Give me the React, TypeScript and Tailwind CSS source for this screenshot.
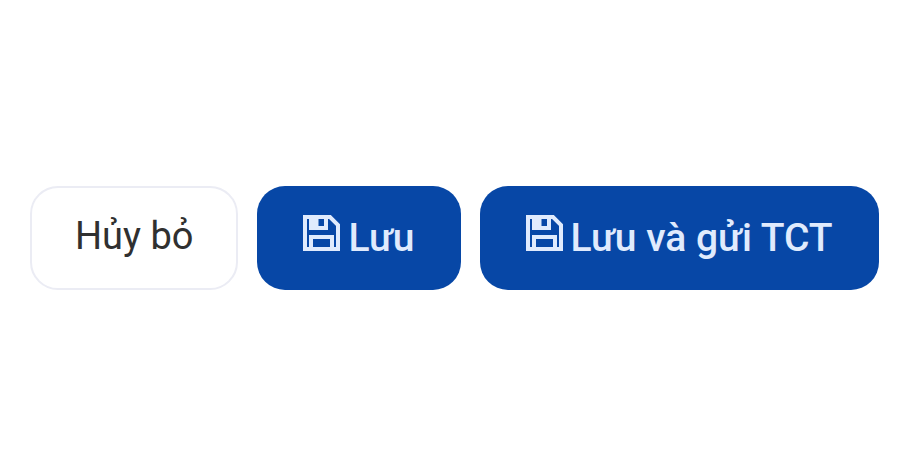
import type { ReactNode } from 'react';

function SaveIcon() {
  return (
    <svg viewBox="0 0 37 36" fill="none" stroke="currentColor" className="h-9 w-[37px] shrink-0" aria-hidden="true">
      <path d="M2 2h25l8 8v24H2z" strokeWidth="4" />
      <path d="M8 2v11h15V2" strokeWidth="4" />
      <path d="M8 2h7v11H8z" fill="currentColor" strokeWidth="1" />
      <path d="M8 34V22h21v12" strokeWidth="4" />
    </svg>
  );
}

function PrimaryButton({ children }: { children: ReactNode }) {
  return (
    <button
      type="button"
      className="flex h-[104px] items-center rounded-[28px] bg-[#0747a6] px-[46px] pb-1 font-medium text-[#e0ebfd]"
    >
      <span className="flex items-baseline gap-2">
        <SaveIcon />
        <span>{children}</span>
      </span>
    </button>
  );
}

export default function App() {
  return (
    <main className="bg-white pt-[186px] pl-[30px] font-['Roboto','Liberation_Sans',sans-serif] text-[39px] leading-none whitespace-nowrap">
      <div className="flex items-center gap-[19px]">
        <button
          type="button"
          className="h-[104px] rounded-[28px] border-2 border-[#ebecf4] bg-white px-[43px] pb-1 text-[38px] text-[#303030]"
        >
          Hủy bỏ
        </button>
        <PrimaryButton>Lưu</PrimaryButton>
        <PrimaryButton>Lưu và gửi TCT</PrimaryButton>
      </div>
    </main>
  );
}
